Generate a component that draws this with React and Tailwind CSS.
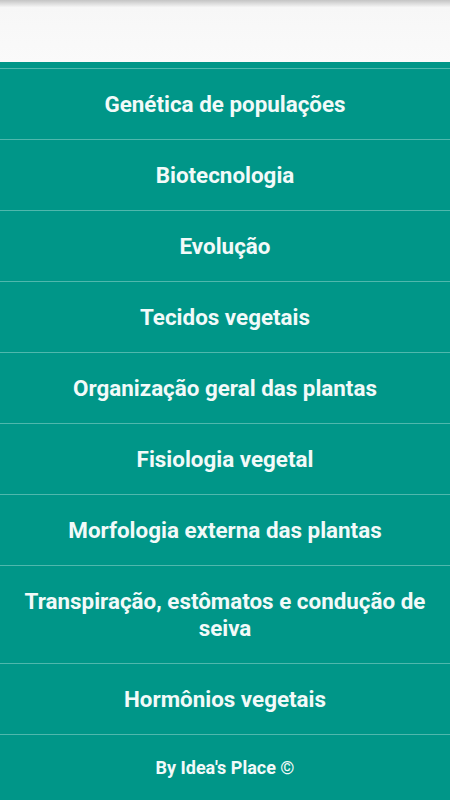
const TOPICS = [
  "Genética de populações",
  "Biotecnologia",
  "Evolução",
  "Tecidos vegetais",
  "Organização geral das plantas",
  "Fisiologia vegetal",
  "Morfologia externa das plantas",
  "Transpiração, estômatos e condução de seiva",
  "Hormônios vegetais",
];

export default function App() {
  return (
    <div className="w-[450px] h-[800px] flex flex-col bg-[#009688] overflow-hidden" style={{ fontFamily: "Roboto, 'Liberation Sans', sans-serif" }}>
      {/* top bar */}
      <div className="h-[62px] shrink-0 bg-gradient-to-b from-[#c4c4c4] via-[#f7f7f7] via-[12%] to-[#fafafa]" />

      <div className="pt-[6px] flex flex-col flex-1">
        <div className="border-t border-[#4fb8ad]" />
        {TOPICS.map((t) => (
          <button
            key={t}
            className="w-full min-h-[71px] border-b border-[#4fb8ad] flex items-center justify-center px-3 pt-[22px] pb-[21px] text-[22.4px] leading-[27px] font-bold text-[#f2faf9] text-center"
          >
            {t}
          </button>
        ))}
        <div className="flex-1 flex items-center justify-center text-[18px] font-bold text-[#f2faf9]">
          By Idea's Place ©
        </div>
      </div>
    </div>
  );
}
